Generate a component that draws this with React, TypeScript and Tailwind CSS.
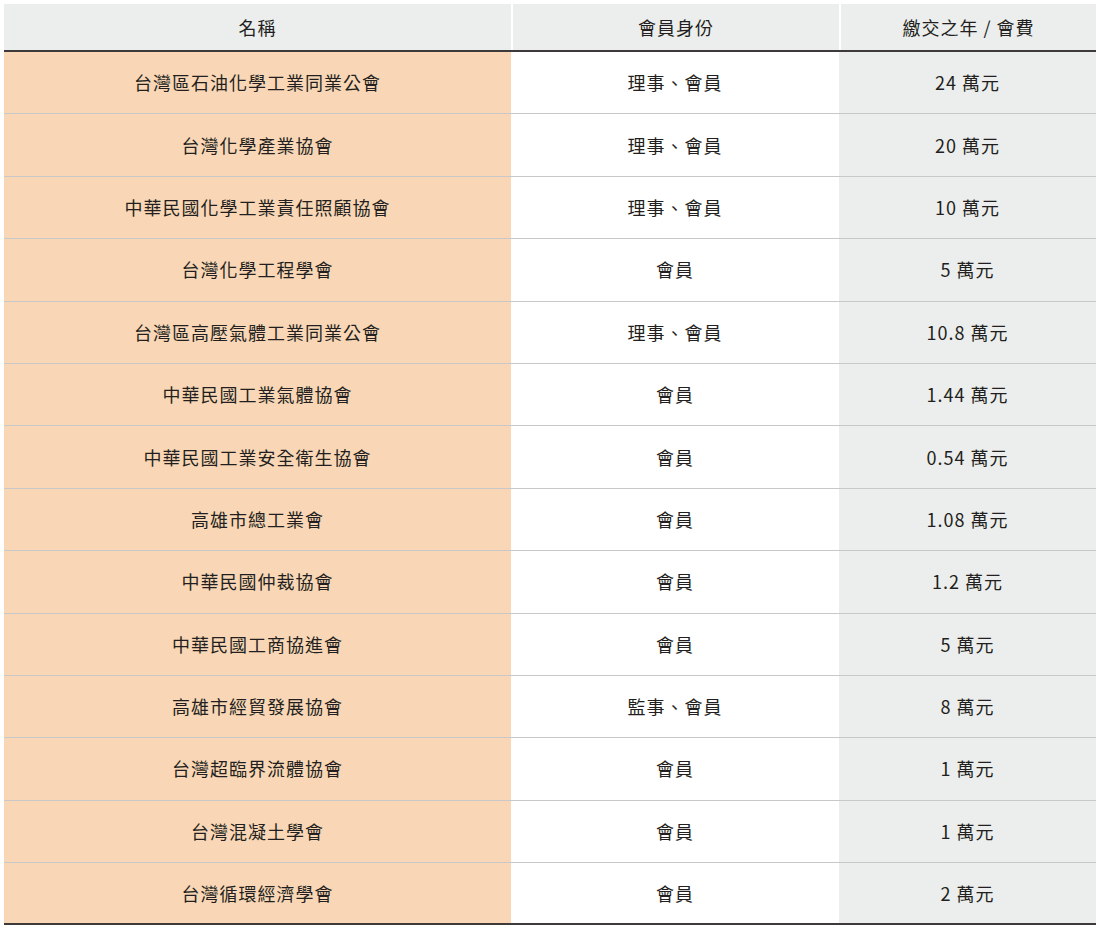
const rows: [string, string, string][] = [
  ["台灣區石油化學工業同業公會", "理事、會員", "24 萬元"],
  ["台灣化學產業協會", "理事、會員", "20 萬元"],
  ["中華民國化學工業責任照顧協會", "理事、會員", "10 萬元"],
  ["台灣化學工程學會", "會員", "5 萬元"],
  ["台灣區高壓氣體工業同業公會", "理事、會員", "10.8 萬元"],
  ["中華民國工業氣體協會", "會員", "1.44 萬元"],
  ["中華民國工業安全衛生協會", "會員", "0.54 萬元"],
  ["高雄市總工業會", "會員", "1.08 萬元"],
  ["中華民國仲裁協會", "會員", "1.2 萬元"],
  ["中華民國工商協進會", "會員", "5 萬元"],
  ["高雄市經貿發展協會", "監事、會員", "8 萬元"],
  ["台灣超臨界流體協會", "會員", "1 萬元"],
  ["台灣混凝土學會", "會員", "1 萬元"],
  ["台灣循環經濟學會", "會員", "2 萬元"],
];

export default function App() {
  return (
    <div className="bg-white p-1 text-[18px] tracking-[1px] text-[#231f20]" style={{ fontFamily: '"Noto Sans CJK TC", "Noto Sans", sans-serif' }}>
      <div className="w-[1092px]">
        <div className="grid h-[48px] grid-cols-[507px_328px_257px] border-b-2 border-[#3e3a39] bg-[#eceeed]">
          <div className="flex items-center justify-center">名稱</div>
          <div className="flex items-center justify-center border-l-2 border-white">會員身份</div>
          <div className="flex items-center justify-center border-l-2 border-white">繳交之年 / 會費</div>
        </div>
        {rows.map(([name, role, fee], i) => (
          <div
            key={name}
            className={`grid h-[62.4px] grid-cols-[507px_328px_257px] ${i === rows.length - 1 ? "border-b-2 border-[#3e3a39]" : "border-b border-[#c8c8c8]"}`}
          >
            <div className="flex items-center justify-center bg-[#f9d7b6]">{name}</div>
            <div className="flex items-center justify-center bg-white">{role}</div>
            <div className="flex items-center justify-center bg-[#eceeed]">{fee}</div>
          </div>
        ))}
      </div>
    </div>
  );
}
